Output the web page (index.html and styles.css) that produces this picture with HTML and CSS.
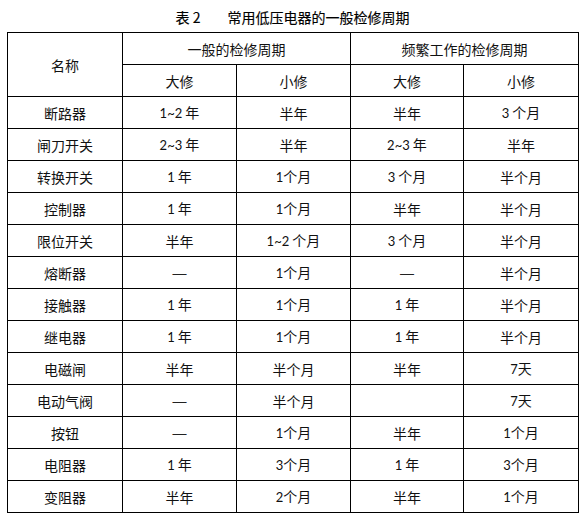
FILE: index.html
```html
<!DOCTYPE html>
<html lang="zh">
<head>
<meta charset="utf-8">
<title>常用低压电器的一般检修周期</title>
<link rel="stylesheet" href="styles.css">
</head>
<body>
<div class="page">
  <div class="caption"><span class="num">表 2</span><span>常用低压电器的一般检修周期</span></div>
  <table class="grid">
    <colgroup>
      <col class="c1"><col class="c2"><col class="c3"><col class="c4"><col class="c5">
    </colgroup>
    <tr><td rowspan="2">名称</td><td colspan="2">一般的检修周期</td><td colspan="2">频繁工作的检修周期</td></tr>
    <tr><td>大修</td><td>小修</td><td>大修</td><td>小修</td></tr>
    <tr><td>断路器</td><td><span class="n">1~2</span> 年</td><td>半年</td><td>半年</td><td><span class="n">3</span> 个月</td></tr>
    <tr><td>闸刀开关</td><td><span class="n">2~3</span> 年</td><td>半年</td><td><span class="n">2~3</span> 年</td><td>半年</td></tr>
    <tr><td>转换开关</td><td><span class="n">1</span> 年</td><td><span class="n">1</span>个月</td><td><span class="n">3</span> 个月</td><td>半个月</td></tr>
    <tr><td>控制器</td><td><span class="n">1</span> 年</td><td><span class="n">1</span>个月</td><td>半年</td><td>半个月</td></tr>
    <tr><td>限位开关</td><td>半年</td><td><span class="n">1~2</span> 个月</td><td><span class="n">3</span> 个月</td><td>半个月</td></tr>
    <tr><td>熔断器</td><td><span class="dash">—</span></td><td><span class="n">1</span>个月</td><td><span class="dash">—</span></td><td>半个月</td></tr>
    <tr><td>接触器</td><td><span class="n">1</span> 年</td><td><span class="n">1</span>个月</td><td><span class="n">1</span> 年</td><td>半个月</td></tr>
    <tr><td>继电器</td><td><span class="n">1</span> 年</td><td><span class="n">1</span>个月</td><td><span class="n">1</span> 年</td><td>半个月</td></tr>
    <tr><td>电磁闸</td><td>半年</td><td>半个月</td><td>半年</td><td><span class="n">7</span>天</td></tr>
    <tr><td>电动气阀</td><td><span class="dash">—</span></td><td>半个月</td><td></td><td><span class="n">7</span>天</td></tr>
    <tr><td>按钮</td><td><span class="dash">—</span></td><td><span class="n">1</span>个月</td><td>半年</td><td><span class="n">1</span>个月</td></tr>
    <tr><td>电阻器</td><td><span class="n">1</span> 年</td><td><span class="n">3</span>个月</td><td><span class="n">1</span> 年</td><td><span class="n">3</span>个月</td></tr>
    <tr><td>变阻器</td><td>半年</td><td><span class="n">2</span>个月</td><td>半年</td><td><span class="n">1</span>个月</td></tr>
  </table>
</div>
</body>
</html>
```

FILE: styles.css
```css
html, body {
  margin: 0;
  padding: 0;
  background: #ffffff;
}
body {
  font-family: "Noto Sans CJK SC", "Noto Sans", sans-serif;
  color: #111111;
}
.page {
  padding: 8px 0 0 7px;
  width: 571px;
}
.caption {
  display: flex;
  justify-content: center;
  gap: 27px;
  font-size: 14px;
  line-height: 18px;
  font-weight: 400;
  height: 24px;
  color: #000;
  -webkit-text-stroke: 0.15px #000;
}
.grid {
  border-collapse: collapse;
  table-layout: fixed;
  width: 571px;
}
.c1 { width: 115px; }
.c2 { width: 114px; }
.c3 { width: 114px; }
.c4 { width: 113px; }
.c5 { width: 115px; }
.grid td {
  border: 1px solid #000;
  height: 31px;
  padding: 0;
  text-align: center;
  vertical-align: middle;
  font-size: 14px;
  line-height: 18px;
}
.n {
  font-family: "Lato", "Liberation Sans", sans-serif;
  font-size: 13px;
}
.dash {
  font-family: "Liberation Sans", sans-serif;
  font-size: 14px;
  color: #222;
}
```
